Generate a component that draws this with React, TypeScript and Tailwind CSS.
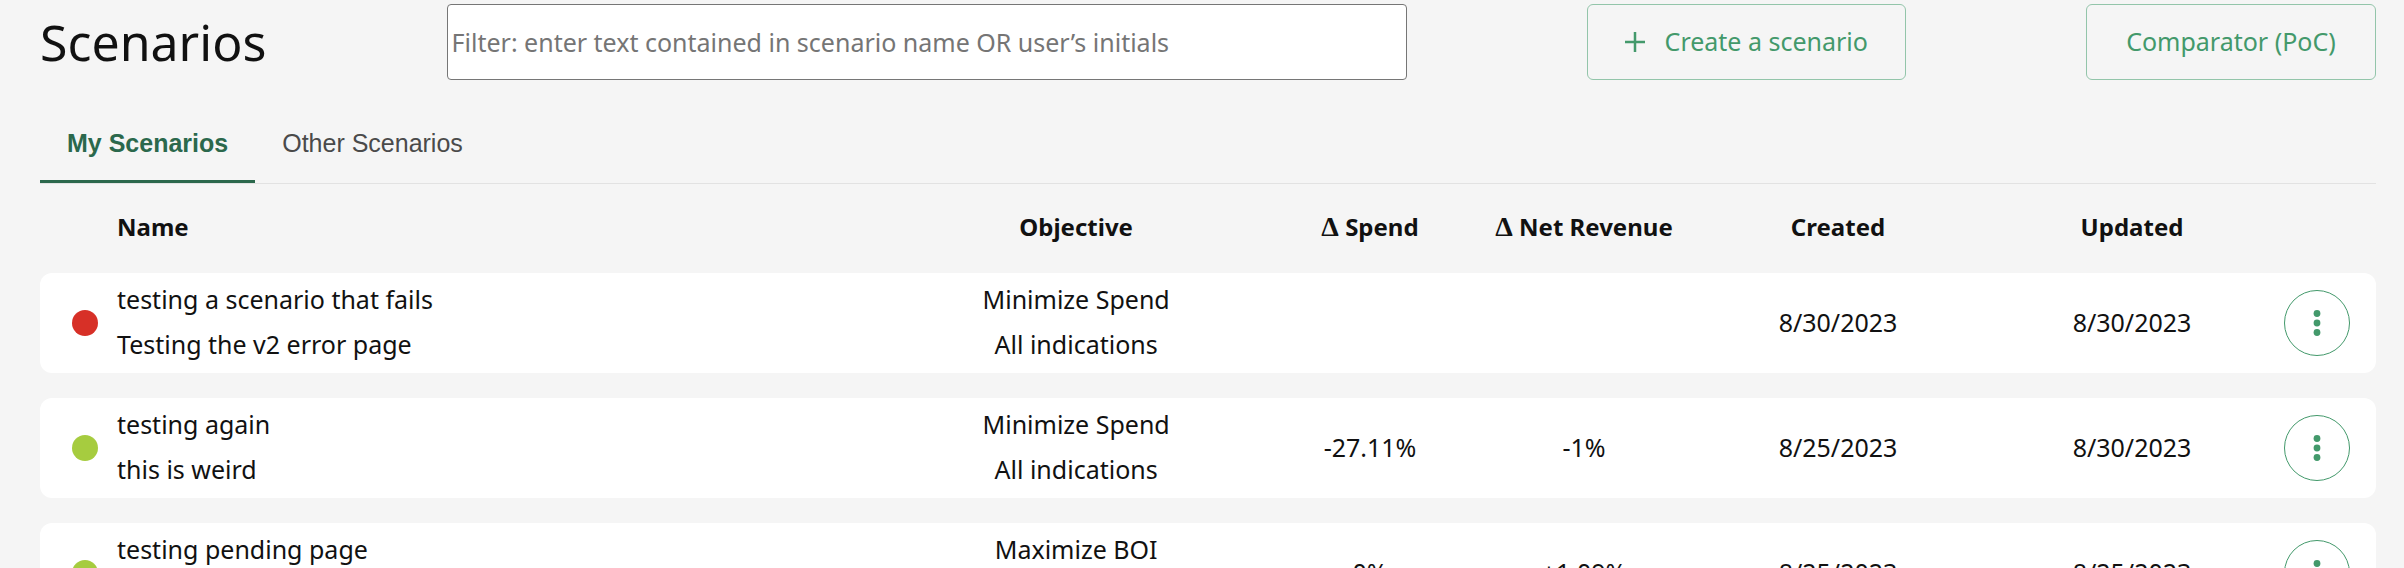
import { useState } from 'react';
import clsx from 'clsx';

interface Scenario {
  name: string;
  description: string;
  failed?: boolean;
  objective: string;
  indications: string;
  spend: string;
  revenue: string;
  created: string;
  updated: string;
}

const scenarios: Scenario[] = [
  {
    name: 'testing a scenario that fails',
    description: 'Testing the v2 error page',
    failed: true,
    objective: 'Minimize Spend',
    indications: 'All indications',
    spend: '',
    revenue: '',
    created: '8/30/2023',
    updated: '8/30/2023',
  },
  {
    name: 'testing again',
    description: 'this is weird',
    objective: 'Minimize Spend',
    indications: 'All indications',
    spend: '-27.11%',
    revenue: '-1%',
    created: '8/25/2023',
    updated: '8/30/2023',
  },
  {
    name: 'testing pending page',
    description: '',
    objective: 'Maximize BOI',
    indications: '',
    spend: '0%',
    revenue: '+1.09%',
    created: '8/25/2023',
    updated: '8/25/2023',
  },
];

const tabs = ['My Scenarios', 'Other Scenarios'];

function Delta() {
  return <span className="font-['Liberation_Serif',serif] text-[28px] leading-none">Δ</span>;
}

function ScenarioRow({ scenario }: { scenario: Scenario }) {
  return (
    <tr className="h-[100px] bg-white text-center">
      <td className="rounded-l-xl">
        <div className={clsx('ml-8 size-[26px] rounded-full', scenario.failed ? 'bg-[#d73027]' : 'bg-[#a6cc3f]')} />
      </td>
      <td className="text-left align-top leading-[45px]">
        <div className="pt-1">{scenario.name}</div>
        <div>{scenario.description}</div>
      </td>
      <td className="align-top leading-[45px]">
        <div className="pt-1">{scenario.objective}</div>
        <div>{scenario.indications}</div>
      </td>
      <td>{scenario.spend}</td>
      <td>{scenario.revenue}</td>
      <td>{scenario.created}</td>
      <td>{scenario.updated}</td>
      <td className="rounded-r-xl pr-[22px]">
        <button
          type="button"
          aria-label={`Actions for ${scenario.name}`}
          className="mx-auto flex size-[66px] items-center justify-center rounded-full border border-[#43996b] text-[#43996b]"
        >
          <svg width="8" height="26" viewBox="0 0 8 26" fill="currentColor" aria-hidden="true">
            <circle cx="4" cy="3.5" r="3.4" />
            <circle cx="4" cy="13" r="3.4" />
            <circle cx="4" cy="22.5" r="3.4" />
          </svg>
        </button>
      </td>
    </tr>
  );
}

export default function App() {
  const [activeTab, setActiveTab] = useState(tabs[0]);
  const [filter, setFilter] = useState('');

  const rows = scenarios.filter((s) => s.name.toLowerCase().includes(filter.toLowerCase()));

  return (
    <main className="h-screen overflow-hidden bg-[#f5f5f5] pt-1 pr-7 pl-10 font-['Noto_Sans',sans-serif] text-[25px] text-[#111]">
      <header className="flex items-center justify-between">
        <h1 className="text-[50px] leading-[76px]">Scenarios</h1>
        <input
          type="text"
          aria-label="Filter scenarios"
          placeholder="Filter: enter text contained in scenario name OR user’s initials"
          value={filter}
          onChange={(e) => setFilter(e.target.value)}
          className="h-[76px] w-[960px] rounded-sm border border-[#767676] bg-white px-1 placeholder:text-[#757575]"
        />
        <button
          type="button"
          className="flex h-[76px] w-[319px] items-center justify-center gap-5 rounded-md border border-[#93c5aa] text-[#43996b]"
        >
          <svg width="20" height="20" viewBox="0 0 20 20" stroke="currentColor" strokeWidth="2.5" aria-hidden="true">
            <path d="M10 0v20M0 10h20" />
          </svg>
          Create a scenario
        </button>
        <button
          type="button"
          className="h-[76px] w-[290px] rounded-md border border-[#93c5aa] text-[#43996b]"
        >
          Comparator (PoC)
        </button>
      </header>

      <div
        role="tablist"
        className="mt-[26px] flex h-[78px] border-b border-[#e2e2e2] font-['Liberation_Sans',sans-serif]"
      >
        {tabs.map((tab) => (
          <button
            key={tab}
            type="button"
            role="tab"
            aria-selected={tab === activeTab}
            onClick={() => setActiveTab(tab)}
            className={clsx(
              'border-b-3 px-[27px] pt-0.5',
              tab === activeTab ? 'border-[#2b684c] font-bold text-[#2b684c]' : 'border-transparent text-[#4a4a4a]',
            )}
          >
            {tab}
          </button>
        ))}
      </div>

      <table className="w-full table-fixed border-separate border-spacing-x-0 border-spacing-y-[25px]">
        <colgroup>
          <col className="w-[77px]" />
          <col />
          <col className="w-[16%]" />
          <col className="w-[214px]" />
          <col className="w-[214px]" />
          <col className="w-[294px]" />
          <col className="w-[294px]" />
          <col className="w-[97px]" />
        </colgroup>
        <thead>
          <tr className="h-[39px] text-2xl leading-9">
            <th aria-label="Status" />
            <th className="pb-[3px] text-left">Name</th>
            <th className="pb-[3px]">Objective</th>
            <th className="pb-[3px]">
              <Delta /> Spend
            </th>
            <th className="pb-[3px]">
              <Delta /> Net Revenue
            </th>
            <th className="pb-[3px]">Created</th>
            <th className="pb-[3px]">Updated</th>
            <th aria-label="Actions" />
          </tr>
        </thead>
        <tbody>
          {rows.map((scenario) => (
            <ScenarioRow key={scenario.name} scenario={scenario} />
          ))}
        </tbody>
      </table>
    </main>
  );
}
